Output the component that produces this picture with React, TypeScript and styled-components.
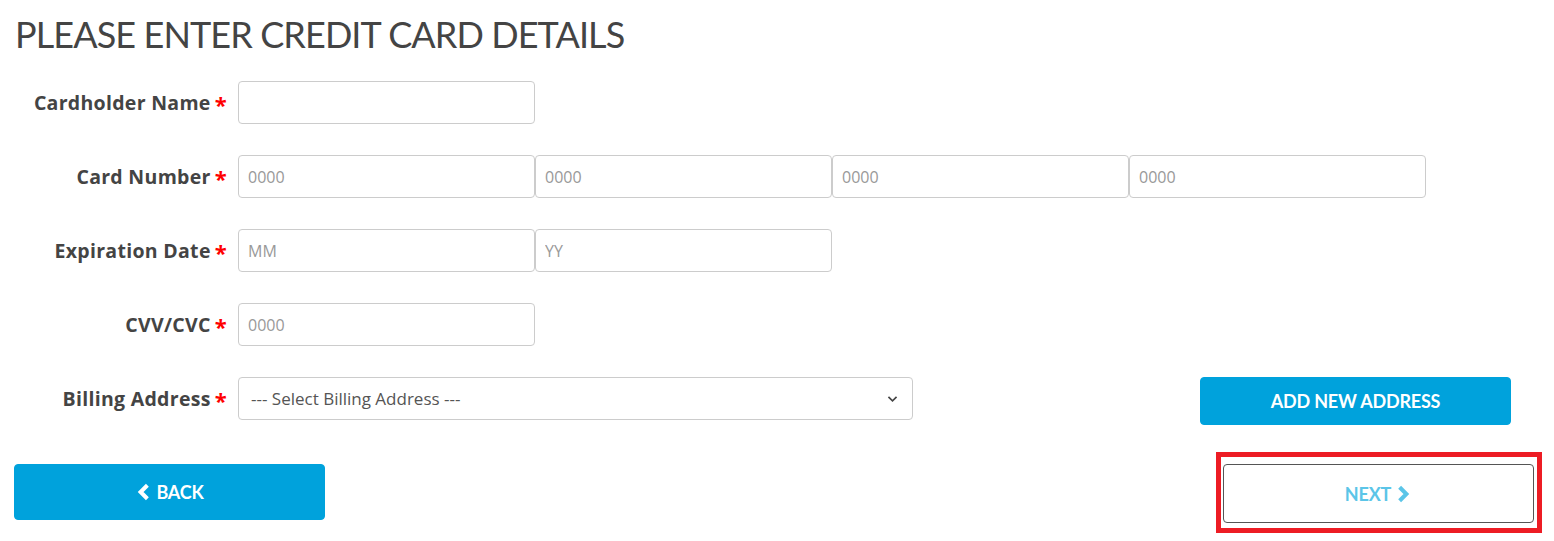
import { FC } from "react";
import styled, { createGlobalStyle } from "styled-components";

const GlobalStyle = createGlobalStyle`
  body {
    margin: 0;
    background: #fff;
    font-family: "Open Sans", "Liberation Sans", sans-serif;
  }
`;

const blue = "#00a2dc";

const Page = styled.main`
  display: flex;
  flex-direction: column;
  padding: 14px 12px 9px 14px;
`;

const Title = styled.h1`
  margin: 0 0 27px 1px;
  font-family: "Lato", "Liberation Sans", sans-serif;
  font-weight: 400;
  font-size: 36px;
  line-height: 40px;
  letter-spacing: -0.9px;
  color: #444;
`;

const Form = styled.form`
  display: flex;
  flex-direction: column;
  gap: 31px;
  padding-right: 31px;
`;

const Row = styled.div`
  display: flex;
  align-items: flex-start;
`;

const Label = styled.label`
  width: 213px;
  flex-shrink: 0;
  height: 43px;
  display: flex;
  align-items: center;
  justify-content: flex-end;
  gap: 4px;
  margin-right: 11px;
  font-family: "Open Sans", "Liberation Sans", sans-serif;
  font-weight: 700;
  font-size: 19.5px;
  letter-spacing: 0.3px;
  color: #444;
`;

const Required = styled.span`
  color: #f00;
  font-size: 22px;
  line-height: 1;
  margin-top: 2px;
`;

const Fields = styled.div`
  display: flex;
  flex: 1;
  align-items: flex-start;
`;

const Input = styled.input`
  box-sizing: border-box;
  width: 297px;
  height: 43px;
  padding: 0 9px;
  border: 1px solid #ccc;
  border-radius: 4px;
  font-family: "Open Sans", "Liberation Sans", sans-serif;
  font-size: 16px;
  color: #555;
  background: #fff;

  &::placeholder {
    color: #999;
  }
`;

const SelectBox = styled.div`
  box-sizing: border-box;
  width: 675px;
  height: 43px;
  display: flex;
  align-items: center;
  justify-content: space-between;
  padding: 0 13px 0 12px;
  border: 1px solid #ccc;
  border-radius: 4px;
  font-size: 17px;
  color: #555;
`;

const Caret = styled.span`
  display: flex;
  color: #444;
`;

const Button = styled.button<{ $outline?: boolean }>`
  box-sizing: border-box;
  width: 311px;
  display: flex;
  align-items: center;
  justify-content: center;
  gap: 3px;
  border-radius: 4px;
  font-family: "Lato", "Liberation Sans", sans-serif;
  font-weight: 700;
  font-size: 18px;
  letter-spacing: -0.2px;
  cursor: pointer;
  background: ${(p) => (p.$outline ? "#fff" : blue)};
  color: ${(p) => (p.$outline ? "#5bc5e8" : "#fff")};
  border: 1px solid ${(p) => (p.$outline ? "#555" : blue)};
`;

const AddButton = styled(Button)`
  height: 48px;
  margin-left: auto;
`;

const Footer = styled.div`
  display: flex;
  justify-content: space-between;
  align-items: flex-start;
  margin-top: 39px;
`;

const BackButton = styled(Button)`
  height: 56px;
`;

const NextButton = styled(Button)`
  height: 59px;
`;

const Highlight = styled.div`
  margin-top: -12px;
  padding: 7px 3px 5px 2px;
  border: 5px solid #ed1c24;
`;

const Chevron: FC<{ dir: "left" | "right" | "down"; size?: number; width?: number }> = ({
  dir,
  size = 18,
  width = 3.6,
}) => {
  const points =
    dir === "left" ? "11,2 5,8 11,14" : dir === "right" ? "5,2 11,8 5,14" : "3,6 8,11 13,6";
  return (
    <svg width={size} height={size} viewBox="0 0 16 16" fill="none">
      <polyline points={points} stroke="currentColor" strokeWidth={width} />
    </svg>
  );
};

const App: FC = () => {
  return (
    <Page>
      <GlobalStyle />
      <Title>PLEASE ENTER CREDIT CARD DETAILS</Title>
      <Form>
        <Row>
          <Label>
            Cardholder Name<Required>*</Required>
          </Label>
          <Fields>
            <Input />
          </Fields>
        </Row>
        <Row>
          <Label>
            Card Number<Required>*</Required>
          </Label>
          <Fields>
            <Input placeholder="0000" />
            <Input placeholder="0000" />
            <Input placeholder="0000" />
            <Input placeholder="0000" />
          </Fields>
        </Row>
        <Row>
          <Label>
            Expiration Date<Required>*</Required>
          </Label>
          <Fields>
            <Input placeholder="MM" />
            <Input placeholder="YY" />
          </Fields>
        </Row>
        <Row>
          <Label>
            CVV/CVC<Required>*</Required>
          </Label>
          <Fields>
            <Input placeholder="0000" />
          </Fields>
        </Row>
        <Row>
          <Label>
            Billing Address<Required>*</Required>
          </Label>
          <Fields>
            <SelectBox>
              --- Select Billing Address ---
              <Caret>
                <Chevron dir="down" size={13} width={2} />
              </Caret>
            </SelectBox>
            <AddButton type="button">ADD NEW ADDRESS</AddButton>
          </Fields>
        </Row>
      </Form>
      <Footer>
        <BackButton type="button">
          <Chevron dir="left" />
          BACK
        </BackButton>
        <Highlight>
          <NextButton type="button" $outline>
            NEXT
            <Chevron dir="right" />
          </NextButton>
        </Highlight>
      </Footer>
    </Page>
  );
};

export default App;
